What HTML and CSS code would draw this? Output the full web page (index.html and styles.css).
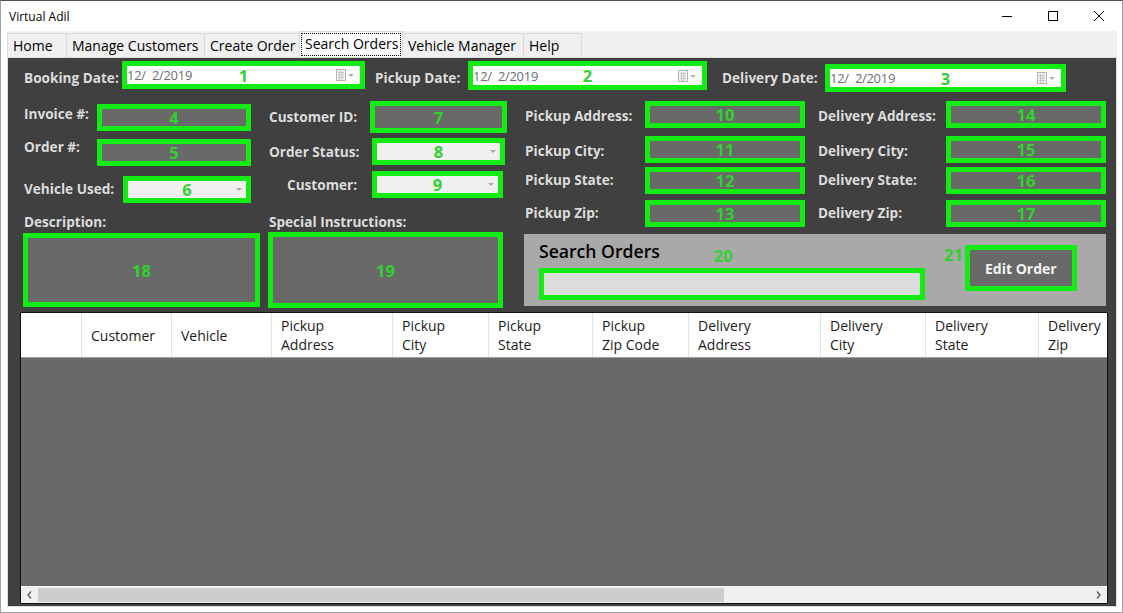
FILE: index.html
```html
<!DOCTYPE html>
<html>
<head>
<meta charset="utf-8">
<link rel="stylesheet" href="styles.css">
</head>
<body>
<div class="window">
  <div class="titlebar">
    <span class="title">Virtual Adil</span>
    <div class="controls">
      <div class="cbtn"><svg width="12" height="12" viewBox="0 0 12 12"><line x1="1" y1="6.5" x2="11" y2="6.5" stroke="#000" stroke-width="1"/></svg></div>
      <div class="cbtn"><svg width="12" height="12" viewBox="0 0 12 12"><rect x="1.5" y="1.5" width="9" height="9" fill="none" stroke="#000" stroke-width="1"/></svg></div>
      <div class="cbtn"><svg width="12" height="12" viewBox="0 0 12 12"><path d="M1 1 L11 11 M11 1 L1 11" stroke="#000" stroke-width="1"/></svg></div>
    </div>
  </div>
  <div class="tabcontrol">
    <div class="tabstrip">
      <div class="tab">Home</div>
      <div class="tab">Manage Customers</div>
      <div class="tab">Create Order</div>
      <div class="tab active"><span class="focus">Search Orders</span></div>
      <div class="tab">Vehicle Manager</div>
      <div class="tab">Help</div>
    </div>
    <div class="page">
      <div class="dates">
        <span class="lbl l-bd">Booking Date:</span>
        <div class="gbox white d1">
          <span class="dtext">12/  2/2019</span>
          <svg class="cal" width="20" height="12" viewBox="0 0 20 12"><rect x="0.5" y="0.5" width="9" height="11" fill="#f4f4f4" stroke="#b4b4b4"/><path d="M2 3.5H8M2 6H8M2 8.5H8M3.5 2V11M6 2V11" stroke="#c4c4c4" stroke-width="1"/><path d="M12 5 L18 5 L15 8 Z" fill="#b0b0b0"/></svg>
          <span class="num">1</span>
        </div>
        <span class="lbl l-pd">Pickup Date:</span>
        <div class="gbox white d2">
          <span class="dtext">12/  2/2019</span>
          <svg class="cal" width="20" height="12" viewBox="0 0 20 12"><rect x="0.5" y="0.5" width="9" height="11" fill="#f4f4f4" stroke="#b4b4b4"/><path d="M2 3.5H8M2 6H8M2 8.5H8M3.5 2V11M6 2V11" stroke="#c4c4c4" stroke-width="1"/><path d="M12 5 L18 5 L15 8 Z" fill="#b0b0b0"/></svg>
          <span class="num">2</span>
        </div>
        <span class="lbl l-dd">Delivery Date:</span>
        <div class="gbox white d3">
          <span class="dtext">12/  2/2019</span>
          <svg class="cal" width="20" height="12" viewBox="0 0 20 12"><rect x="0.5" y="0.5" width="9" height="11" fill="#f4f4f4" stroke="#b4b4b4"/><path d="M2 3.5H8M2 6H8M2 8.5H8M3.5 2V11M6 2V11" stroke="#c4c4c4" stroke-width="1"/><path d="M12 5 L18 5 L15 8 Z" fill="#b0b0b0"/></svg>
          <span class="num">3</span>
        </div>
      </div>

      <div class="main">
        <div class="col col-a">
          <div class="frow a1"><span class="lbl">Invoice #:</span><div class="gbox dark b-inv"><span class="num">4</span></div></div>
          <div class="frow a2"><span class="lbl">Order #:</span><div class="gbox dark b-ord"><span class="num">5</span></div></div>
          <div class="frow a3"><span class="lbl">Vehicle Used:</span><div class="gbox light b-veh"><svg class="arrow" width="6" height="4" viewBox="0 0 6 4"><path d="M0 0H6L3 3Z" fill="#a8a8a8"/></svg><span class="num">6</span></div></div>
          <span class="lbl blk desc">Description:</span>
          <div class="gbox dark b-desc"><span class="num">18</span></div>
        </div>
        <div class="col col-b">
          <div class="frow b1"><span class="lbl">Customer ID:</span><div class="gbox dark b-cid"><span class="num">7</span></div></div>
          <div class="frow b2"><span class="lbl">Order Status:</span><div class="gbox light b-st"><svg class="arrow" width="6" height="4" viewBox="0 0 6 4"><path d="M0 0H6L3 3Z" fill="#a8a8a8"/></svg><span class="num">8</span></div></div>
          <div class="frow b3"><span class="lbl">Customer:</span><div class="gbox light b-cu"><svg class="arrow" width="6" height="4" viewBox="0 0 6 4"><path d="M0 0H6L3 3Z" fill="#a8a8a8"/></svg><span class="num">9</span></div></div>
          <span class="lbl blk spec">Special Instructions:</span>
          <div class="gbox dark b-spec"><span class="num">19</span></div>
        </div>
        <div class="col col-c">
          <div class="addr">
            <span class="lbl">Pickup Address:</span><div class="gbox dark ab"><span class="num">10</span></div><span></span>
            <span class="lbl">Delivery Address:</span><div class="gbox dark ab"><span class="num">14</span></div>
            <span class="lbl">Pickup City:</span><div class="gbox dark ab"><span class="num">11</span></div><span></span>
            <span class="lbl">Delivery City:</span><div class="gbox dark ab"><span class="num">15</span></div>
            <span class="lbl">Pickup State:</span><div class="gbox dark ab"><span class="num">12</span></div><span></span>
            <span class="lbl">Delivery State:</span><div class="gbox dark ab"><span class="num">16</span></div>
            <span class="lbl">Pickup Zip:</span><div class="gbox dark ab"><span class="num">13</span></div><span></span>
            <span class="lbl">Delivery Zip:</span><div class="gbox dark ab"><span class="num">17</span></div>
          </div>
          <div class="search">
            <div class="s-left">
              <div class="s-title"><span class="s-head">Search Orders</span><span class="tag t20">20</span></div>
              <div class="gbox pale b-search"></div>
            </div>
            <span class="tag t21">21</span>
            <div class="gbox dark b-edit"><span class="edit">Edit Order</span></div>
          </div>
        </div>
      </div>

      <div class="grid">
        <div class="ghead">
          <div class="hc"></div>
          <div class="hc">Customer</div>
          <div class="hc">Vehicle</div>
          <div class="hc">Pickup<br>Address</div>
          <div class="hc">Pickup<br>City</div>
          <div class="hc">Pickup<br>State</div>
          <div class="hc">Pickup<br>Zip Code</div>
          <div class="hc">Delivery<br>Address</div>
          <div class="hc">Delivery<br>City</div>
          <div class="hc">Delivery<br>State</div>
          <div class="hc">Delivery<br>Zip</div>
        </div>
        <div class="gbody"></div>
        <div class="hscroll">
          <div class="sarrow"><svg width="5" height="8" viewBox="0 0 5 8"><path d="M4 0.5 L1 4 L4 7.5" fill="none" stroke="#606060" stroke-width="1.4"/></svg></div>
          <div class="thumb"></div>
          <div class="track"></div>
          <div class="sarrow"><svg width="5" height="8" viewBox="0 0 5 8"><path d="M1 0.5 L4 4 L1 7.5" fill="none" stroke="#606060" stroke-width="1.4"/></svg></div>
        </div>
      </div>
    </div>
  </div>
</div>
</body>
</html>
```

FILE: styles.css
```css
* { box-sizing: border-box; }
html, body { margin: 0; padding: 0; }
body {
  width: 1123px;
  height: 613px;
  overflow: hidden;
  background: #fff;
  font-family: "Open Sans", "Noto Sans", sans-serif;
}
.window {
  width: 1123px;
  height: 613px;
  border: 1px solid #a0a0a0;
  border-top-color: #505050;
  background: #fff;
}
.titlebar {
  height: 30px;
  display: flex;
  align-items: center;
}
.title {
  padding-left: 8px;
  font-size: 12px;
  color: #000;
}
.controls { margin-left: auto; display: flex; }
.cbtn {
  width: 46px;
  height: 30px;
  display: flex;
  align-items: center;
  justify-content: center;
}
.tabcontrol {
  margin-left: 6px;
  width: 1110px;
}
.tabstrip {
  height: 26px;
  background: #f0f0f0;
  display: flex;
  align-items: flex-end;
}
.tab {
  height: 24px;
  border: 1px solid #d9d9d9;
  border-bottom: none;
  background: #f0f0f0;
  font-size: 14px;
  line-height: 23px;
  padding-left: 5px;
  color: #000;
  white-space: nowrap;
  margin-right: -1px;
}
.tab:nth-child(1) { width: 60px; }
.tab:nth-child(2) { width: 139px; }
.tab:nth-child(3) { width: 96px; }
.tab:nth-child(4) { width: 104px; }
.tab:nth-child(5) { width: 122px; }
.tab:nth-child(6) { width: 59px; }
.tab.active {
  height: 26px;
  background: #fff;
  padding: 1px;
  position: relative;
  z-index: 1;
}
.focus {
  display: block;
  height: 23px;
  border: 1px dotted #000;
  padding-left: 3px;
  line-height: 20px;
}
.page {
  height: 550px;
  border: 1px solid #dcdcdc;
  background: #404040;
  display: flex;
  flex-direction: column;
}

/* labels */
.lbl {
  font-size: 13.6px;
  font-weight: 700;
  color: #dcdcdc;
  line-height: 18px;
  white-space: nowrap;
  flex: 0 0 auto;
}
.blk { display: block; padding-left: 1px; }

/* green annotation boxes */
.gbox {
  border: 5px solid #12ec12;
  position: relative;
  display: flex;
  align-items: center;
  flex: 0 0 auto;
}
.gbox.white { background: #fff; }
.gbox.dark { background: #696969; }
.gbox.light { background: #f0f0f0; }
.gbox.pale { background: #dcdcdc; }
.num {
  position: absolute;
  left: 0; right: 0; top: 0; bottom: 0;
  display: flex;
  align-items: center;
  justify-content: center;
  color: #2fd22f;
  font-weight: 700;
  font-size: 16.5px;
}
.tag {
  color: #2fd22f;
  font-weight: 700;
  font-size: 16.5px;
  line-height: 20px;
}
.dtext {
  white-space: pre;
  font-size: 13px;
  letter-spacing: -0.3px;
  color: #6e6e6e;
}
.cal { margin-left: auto; margin-right: 4px; }
.arrow { margin-left: auto; margin-right: 4px; }

/* date row */
.dates {
  height: 41px;
  padding: 3px 0 0 16px;
  display: flex;
  align-items: flex-start;
}
.dates .lbl { margin-top: 8px; }
.l-bd { width: 98px; }
.l-pd { width: 93px; margin-left: 10px; }
.l-dd { width: 103px; margin-left: 15px; }
.d1 { width: 243px; height: 28px; }
.d2 { width: 239px; height: 29px; }
.d3 { width: 241px; height: 28px; margin-top: 3px; }

/* main area */
.main {
  display: flex;
  padding-left: 15px;
  height: 213px;
}
.col { display: flex; flex-direction: column; flex: 0 0 auto; }
.col-a { width: 245px; }
.col-b { width: 256px; }
.col-c { width: 582px; }
.frow { display: flex; align-items: flex-start; }
.frow .lbl { padding-left: 1px; }

.a1 { margin-top: 5px; }
.a1 .lbl { width: 74px; margin-top: 1px; }
.a2 { margin-top: 8px; }
.a2 .lbl { width: 74px; margin-top: -1px; }
.a3 { margin-top: 10px; }
.a3 .lbl { width: 100px; margin-top: 4px; }
.b-inv, .b-ord { width: 154px; height: 27px; }
.b-veh { width: 128px; height: 27px; }
.desc { margin-top: 10px; }
.b-desc { width: 237px; height: 74px; margin-top: 2px; }

.b1 { margin-top: 2px; }
.b1 .lbl { width: 102px; margin-top: 7px; }
.b2 { margin-top: 5px; }
.b2 .lbl { width: 104px; margin-top: 5px; }
.b3 { margin-top: 6px; }
.b3 .lbl { width: 104px; margin-top: 5px; padding-left: 19px; }
.b-cid { width: 137px; height: 32px; }
.b-st { width: 133px; height: 27px; }
.b-cu { width: 131px; height: 27px; }
.spec { margin-top: 15px; }
.b-spec { width: 235px; height: 76px; margin-top: 1px; }

.addr {
  margin-top: 2px;
  display: grid;
  grid-template-columns: 121px 160px 12px 129px 160px;
  grid-template-rows: 35px 31px 33px 27px;
  align-items: start;
}
.addr .lbl { padding-left: 1px; margin-top: 6px; }
.addr .lbl:nth-child(n+11) { margin-top: 4px; }
.ab { height: 27px; }

.search {
  margin-top: 7px;
  height: 72px;
  background: #a9a9a9;
  display: flex;
  align-items: flex-start;
}
.s-left { padding: 5px 0 0 15px; }
.s-title { display: flex; align-items: flex-start; height: 24px; }
.s-head {
  font-size: 17.6px;
  font-weight: 600;
  color: #000;
  line-height: 24px;
}
.t20 { margin-left: 54px; margin-top: 7px; }
.b-search { width: 386px; height: 32px; margin-top: 5px; }
.t21 { margin-left: 19px; margin-top: 11px; }
.b-edit {
  width: 112px;
  height: 46px;
  margin-left: 2px;
  margin-top: 11px;
  justify-content: center;
}
.edit {
  color: #f4f4f4;
  font-size: 14px;
  font-weight: 700;
}

/* data grid */
.grid {
  margin: 0 0 0 12px;
  width: 1088px;
  height: 292px;
  border: 1px solid #101010;
  display: flex;
  flex-direction: column;
  background: #696969;
}
.ghead {
  height: 45px;
  flex: 0 0 auto;
  display: flex;
  background: #fff;
  border-bottom: 1px solid #a0a0a0;
  overflow: hidden;
}
.hc {
  flex: 0 0 auto;
  border-right: 1px solid #e2e2e2;
  padding-left: 9px;
  display: flex;
  align-items: center;
  font-size: 14px;
  line-height: 19px;
  color: #1b1b1b;
  white-space: nowrap;
}
.hc:nth-child(1) { width: 61px; }
.hc:nth-child(2) { width: 90px; }
.hc:nth-child(3) { width: 100px; }
.hc:nth-child(4) { width: 121px; }
.hc:nth-child(5) { width: 96px; }
.hc:nth-child(6) { width: 104px; }
.hc:nth-child(7) { width: 96px; }
.hc:nth-child(8) { width: 132px; }
.hc:nth-child(9) { width: 105px; }
.hc:nth-child(10) { width: 113px; }
.hc:nth-child(11) { width: 90px; }
.gbody { flex: 1 1 auto; background: #696969; }
.hscroll {
  height: 17px;
  flex: 0 0 auto;
  background: #f0f0f0;
  display: flex;
  align-items: center;
}
.sarrow {
  width: 17px;
  height: 17px;
  display: flex;
  align-items: center;
  justify-content: center;
  flex: 0 0 auto;
}
.thumb { width: 686px; height: 14px; background: #cdcdcd; flex: 0 0 auto; }
.track { flex: 1 1 auto; }
```
